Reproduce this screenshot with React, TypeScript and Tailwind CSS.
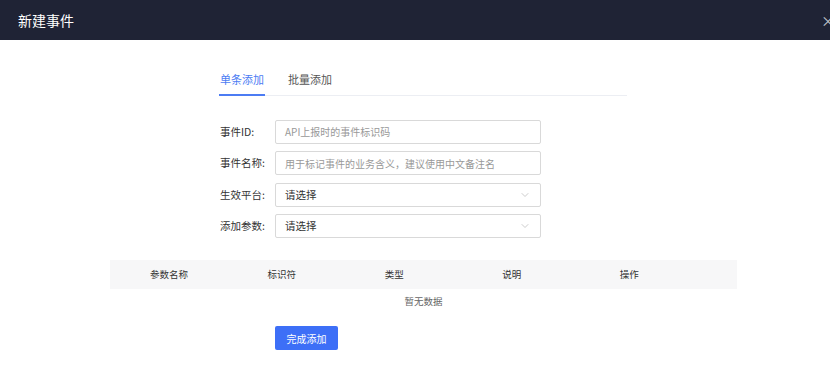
import { ChevronDown } from "lucide-react";

const font = { fontFamily: '"Noto Sans CJK SC", "Noto Sans", sans-serif' };

// Form row with a label and an input or select
function FormRow({
  label,
  placeholder,
  select,
}: {
  label: string;
  placeholder: string;
  select?: boolean;
}) {
  return (
    <div className="flex items-center h-[24px]">
      <label className="w-[55px] text-[10.5px] text-[#333]">{label}</label>
      <div className="flex-1 h-full flex items-center justify-between border border-[#d9d9d9] rounded-[2px] px-[9px] bg-white">
        <span
          className={
            select ? "text-[10.5px] text-[#333]" : "text-[10px] text-[#999]"
          }
        >
          {placeholder}
        </span>
        {select && <ChevronDown className="w-3 h-3 text-[#bbb]" strokeWidth={1.5} />}
      </div>
    </div>
  );
}

function App() {
  const columns = ["参数名称", "标识符", "类型", "说明", "操作"];

  return (
    <div className="w-[830px] h-[368px] bg-white overflow-hidden" style={font}>
      {/* Header */}
      <div className="h-[40px] bg-[#1f2335] flex items-center justify-between pl-[18px]">
        <span className="text-white text-[14px]">新建事件</span>
        <span className="text-[#c0c4cc] text-[14px] -mr-[5px]">×</span>
      </div>

      {/* Tabs */}
      <div className="mt-[31px] ml-[219px] w-[408px] flex border-b border-[#eceef3]">
        <div className="pb-[6px] border-b-2 border-[#4c7cf3] -mb-px text-[11px] text-[#4c7cf3] px-[1px]">
          单条添加
        </div>
        <div className="ml-[23px] pb-[6px] text-[11px] text-[#555]">批量添加</div>
      </div>

      {/* Form */}
      <div className="ml-[220px] w-[321px] mt-[24px] flex flex-col gap-[7.5px]">
        <FormRow label="事件ID:" placeholder="API上报时的事件标识码" />
        <FormRow label="事件名称:" placeholder="用于标记事件的业务含义，建议使用中文备注名" />
        <FormRow label="生效平台:" placeholder="请选择" select />
        <FormRow label="添加参数:" placeholder="请选择" select />
      </div>

      {/* Table */}
      <div className="ml-[110px] w-[627px] mt-[22px]">
        <div className="h-[29px] bg-[#f7f7f8] flex items-center pl-[40px]">
          {columns.map((c) => (
            <div key={c} className="w-[117.5px] text-[9.5px] text-[#333]">
              {c}
            </div>
          ))}
        </div>
        <div className="h-[24px] flex items-center justify-center text-[9.5px] text-[#666]">
          暂无数据
        </div>
      </div>

      {/* Submit */}
      <button className="ml-[275px] mt-[13px] w-[63px] h-[24px] bg-[#3d6ff7] rounded-[2px] text-white text-[10px]">
        完成添加
      </button>
    </div>
  );
}

export default App;
